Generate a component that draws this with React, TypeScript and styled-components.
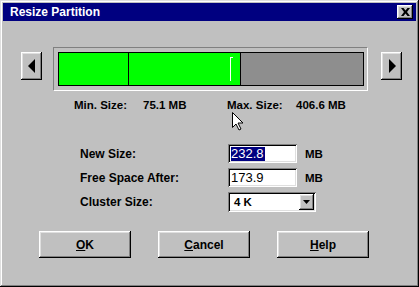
import React from 'react'
import styled, { createGlobalStyle } from 'styled-components'

const GlobalStyle = createGlobalStyle`
  html, body {
    margin: 0;
    padding: 0;
    background: #c0c0c0;
  }
  body {
    font-family: "Liberation Sans", Arial, sans-serif;
  }
`

const Window = styled.div`
  position: relative;
  width: 419px;
  height: 287px;
  box-sizing: border-box;
  padding: 3px;
  background: #c0c0c0;
  box-shadow: inset -1px -1px #000, inset 1px 1px #dfdfdf, inset -2px -2px #808080,
    inset 2px 2px #fff;
  display: flex;
  flex-direction: column;
  font-size: 11.5px;
  font-weight: bold;
  color: #000;
`

const TitleBar = styled.div`
  height: 18px;
  background: #000080;
  color: #fff;
  display: flex;
  align-items: center;
  justify-content: space-between;
  padding: 0 3px 0 7px;
  font-size: 12px;
`

const Raised = styled.div`
  box-sizing: border-box;
  background: #c0c0c0;
  box-shadow: inset -1px -1px #000, inset 1px 1px #fff, inset -2px -2px #808080,
    inset 2px 2px #dfdfdf;
  display: flex;
  align-items: center;
  justify-content: center;
`

const CloseBox = styled(Raised)`
  width: 16px;
  height: 14px;
`

const Body = styled.div`
  display: flex;
  flex-direction: column;
  padding-top: 26px;
`

const PartitionRow = styled.div`
  display: flex;
  align-items: flex-start;
  padding-left: 18px;
`

const ArrowButton = styled(Raised)<{ $gap: number }>`
  width: 21px;
  height: 28px;
  margin-top: 5px;
  margin-left: ${p => p.$gap}px;
`

const Frame = styled.div`
  box-sizing: border-box;
  width: 315px;
  height: 44px;
  margin-left: 11px;
  padding: 4px 3px 4px 4px;
  border: 1px solid;
  border-color: #808080 #fff #fff #808080;
`

const Bar = styled.div`
  position: relative;
  height: 34px;
  box-sizing: border-box;
  border: 1px solid #000;
  display: flex;
  background: #8e8e8e;
`

const Segment = styled.div<{ $w: number }>`
  width: ${p => p.$w}px;
  background: #00ff00;
  border-right: 1px solid #000;
`

const Handle = styled.div`
  position: absolute;
  left: 171px;
  top: 4px;
  width: 2px;
  height: 23px;
  border-left: 1px solid #fff;
  border-top: 1px solid #fff;
`

const SizeRow = styled.div`
  display: flex;
  margin-top: 8px;
  padding-left: 71px;
  line-height: 13px;
  height: 13px;
`

const Stat = styled.div<{ $w: number }>`
  display: flex;
  width: ${p => p.$w}px;
`

const StatLabel = styled.span`
  width: 69px;
`

const Form = styled.div`
  display: grid;
  grid-template-columns: 148px 69px 8px auto;
  grid-auto-rows: 19px;
  row-gap: 5px;
  align-items: center;
  margin-top: 32px;
  padding-left: 77px;
  font-size: 12px;
`

const Label = styled.span``

const Unit = styled.span`
  grid-column: 4;
  font-size: 11.5px;
`

const Field = styled.div`
  grid-column: 2;
  height: 19px;
  box-sizing: border-box;
  background: #fff;
  box-shadow: inset 1px 1px #808080, inset -1px -1px #fff, inset 2px 2px #000,
    inset -2px -2px #dfdfdf;
  padding: 0 3px;
  display: flex;
  align-items: center;
  font-size: 13px;
  font-weight: normal;
`

const Selected = styled.span`
  background: #000080;
  color: #fff;
  line-height: 14px;
  padding: 0 1px 0 0;
`

const Select = styled(Field)`
  grid-column: 2 / span 3;
  width: 88px;
  height: 20px;
  padding: 0 2px 0 6px;
  justify-content: space-between;
  font-size: 11.5px;
  font-weight: bold;
`

const DropButton = styled(Raised)`
  width: 15px;
  height: 16px;
`

const ButtonRow = styled.div`
  display: flex;
  gap: 27px;
  margin-top: 20px;
  padding-left: 36px;
`

const PushButton = styled(Raised)`
  width: 92px;
  height: 27px;
  font-size: 12px;
`

const Key = styled.span`
  text-decoration: underline;
`

const Pointer = styled.svg`
  position: absolute;
  left: 232px;
  top: 112px;
`

export default function App() {
  return (
    <>
      <GlobalStyle />
      <Window>
        <TitleBar>
          <span>Resize Partition</span>
          <CloseBox>
            <svg width="9" height="8" viewBox="0 0 9 8">
              <path d="M0 0h2.5l2 2.5 2-2.5H9L6 4l3 4H6.5l-2-2.5-2 2.5H0l3-4z" fill="#000" />
            </svg>
          </CloseBox>
        </TitleBar>
        <Body>
          <PartitionRow>
            <ArrowButton $gap={0}>
              <svg width="8" height="14" viewBox="0 0 8 14">
                <path d="M7 0v14L0 7z" fill="#000" />
              </svg>
            </ArrowButton>
            <Frame>
              <Bar>
                <Segment $w={69} />
                <Segment $w={111} />
                <Handle />
              </Bar>
            </Frame>
            <ArrowButton $gap={13}>
              <svg width="8" height="14" viewBox="0 0 8 14">
                <path d="M1 0v14L8 7z" fill="#000" />
              </svg>
            </ArrowButton>
          </PartitionRow>
          <SizeRow>
            <Stat $w={153}>
              <StatLabel>Min. Size:</StatLabel>
              <span>75.1 MB</span>
            </Stat>
            <Stat $w={160}>
              <StatLabel>Max. Size:</StatLabel>
              <span>406.6 MB</span>
            </Stat>
          </SizeRow>
          <Form>
            <Label>New Size:</Label>
            <Field>
              <Selected>232.8</Selected>
            </Field>
            <Unit>MB</Unit>
            <Label>Free Space After:</Label>
            <Field>173.9</Field>
            <Unit>MB</Unit>
            <Label>Cluster Size:</Label>
            <Select>
              <span>4 K</span>
              <DropButton>
                <svg width="7" height="4" viewBox="0 0 7 4">
                  <path d="M0 0h7L3.5 4z" fill="#000" />
                </svg>
              </DropButton>
            </Select>
          </Form>
          <ButtonRow>
            <PushButton>
              <span><Key>O</Key>K</span>
            </PushButton>
            <PushButton>
              <span><Key>C</Key>ancel</span>
            </PushButton>
            <PushButton>
              <span><Key>H</Key>elp</span>
            </PushButton>
          </ButtonRow>
        </Body>
        <Pointer width="12" height="19" viewBox="0 0 12 19">
          <path
            d="M0.5 0.5v15l3.5-3.5 3 6 2-1-3-6h5z"
            fill="#fff"
            stroke="#000"
            strokeWidth="1"
          />
        </Pointer>
      </Window>
    </>
  )
}
